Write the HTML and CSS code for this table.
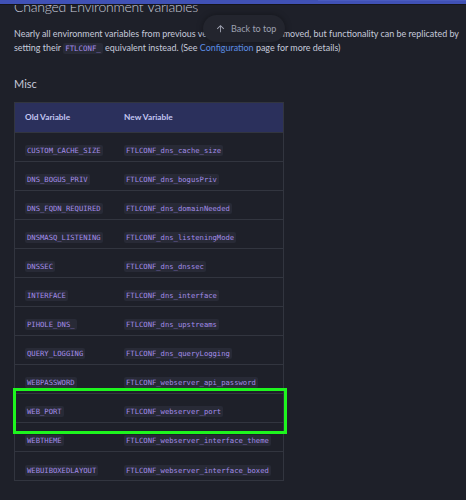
FILE: index.html
```html
<!DOCTYPE html>
<html lang="en">
<head>
<meta charset="utf-8">
<title>Changed Environment Variables</title>
<link rel="stylesheet" href="styles.css">
</head>
<body>
<header class="topbar"><div class="topbar-tabs"></div></header>
<main class="content">
  <h2 class="title">Changed Environment Variables</h2>
  <p class="lead">Nearly all environment variables from previous versions have been removed, but functionality can be replicated by setting their <code class="inline">FTLCONF_</code> equivalent instead. (See <a class="link" href="#">Configuration</a> page for more details)</p>
  <h3 class="subtitle">Misc</h3>
  <div class="table-wrap">
    <table class="vars">
      <thead>
        <tr><th class="c1">Old Variable</th><th>New Variable</th></tr>
      </thead>
      <tbody>
        <tr><td><code>CUSTOM_CACHE_SIZE</code></td><td><code>FTLCONF_dns_cache_size</code></td></tr>
        <tr><td><code>DNS_BOGUS_PRIV</code></td><td><code>FTLCONF_dns_bogusPriv</code></td></tr>
        <tr><td><code>DNS_FQDN_REQUIRED</code></td><td><code>FTLCONF_dns_domainNeeded</code></td></tr>
        <tr><td><code>DNSMASQ_LISTENING</code></td><td><code>FTLCONF_dns_listeningMode</code></td></tr>
        <tr><td><code>DNSSEC</code></td><td><code>FTLCONF_dns_dnssec</code></td></tr>
        <tr><td><code>INTERFACE</code></td><td><code>FTLCONF_dns_interface</code></td></tr>
        <tr><td><code>PIHOLE_DNS_</code></td><td><code>FTLCONF_dns_upstreams</code></td></tr>
        <tr><td><code>QUERY_LOGGING</code></td><td><code>FTLCONF_dns_queryLogging</code></td></tr>
        <tr><td><code>WEBPASSWORD</code></td><td><code>FTLCONF_webserver_api_password</code></td></tr>
        <tr><td><code>WEB_PORT</code></td><td><code>FTLCONF_webserver_port</code></td></tr>
        <tr><td><code>WEBTHEME</code></td><td><code>FTLCONF_webserver_interface_theme</code></td></tr>
        <tr><td><code>WEBUIBOXEDLAYOUT</code></td><td><code>FTLCONF_webserver_interface_boxed</code></td></tr>
      </tbody>
    </table>
  </div>
</main>
<a class="back-top" href="#">
  <svg class="back-top-icon" viewBox="0 0 24 24" width="11" height="11" aria-hidden="true"><path d="M13 20h-2V8l-5.5 5.5-1.42-1.42L12 4.16l7.92 7.92-1.42 1.42L13 8v12z" fill="currentColor"/></svg>
  <span>Back to top</span>
</a>
<div class="highlight"></div>
</body>
</html>
```
FILE: styles.css
```css
html, body {
  margin: 0;
  padding: 0;
  background: #1e2029;
}
body {
  font-family: "Lato", "Noto Sans", sans-serif;
  color: #bfc3d8;
  width: 466px;
  height: 500px;
  overflow: hidden;
  position: relative;
}
.topbar {
  position: absolute;
  left: 0;
  top: 0;
  width: 466px;
  height: 4px;
  background: #4051b5;
  box-shadow: 0 1px 0 #14151b;
  z-index: 5;
}
.topbar-tabs {
  margin-left: 318px;
  height: 1px;
  background: #4a5bc0;
}
.content {
  padding: 0 2px 0 14px;
}
.title {
  margin: -2.5px 0 0;
  font-size: 14px;
  line-height: 18px;
  letter-spacing: -0.25px;
  font-weight: 300;
  color: #c6c9d9;
}
.lead {
  margin: 11px 0 0;
  font-size: 8.95px;
  line-height: 14px;
  color: #c6cadb;
}
code {
  font-family: "DejaVu Sans Mono", "Liberation Mono", monospace;
  font-size: 7.2px;
  color: #a38ce9;
  background: #282a36;
  padding: 1px 2px;
  border-radius: 2px;
}
.inline {
  font-size: 7.4px;
}
.link {
  color: #5c8ee6;
  text-decoration: none;
}
.subtitle {
  margin: 20px 0 0;
  font-size: 11px;
  line-height: 15px;
  font-weight: 400;
  color: #c6c9d9;
}
.table-wrap {
  margin-top: 11px;
  width: 270px;
}
.vars {
  width: 270px;
  border-collapse: collapse;
  table-layout: fixed;
  border: 1px solid #32353f;
}
.vars th {
  background: #2b305c;
  color: #c4c7f2;
  font-size: 8.3px;
  font-weight: 700;
  text-align: left;
  height: 29px;
  padding: 0 10px;
}
.vars th.c1 {
  width: 79px;
}
.vars td {
  height: 28.05px;
  padding: 0 10px;
  border-top: 1px solid #32353f;
  white-space: nowrap;
}
.back-top {
  position: absolute;
  left: 203px;
  top: 15px;
  width: 82px;
  height: 27px;
  box-sizing: border-box;
  border-radius: 14px;
  background: #23252e;
  box-shadow: 0 0 6px rgba(0, 0, 0, 0.35);
  display: flex;
  align-items: center;
  gap: 5px;
  padding-left: 12px;
  color: #9ea1b0;
  font-size: 9px;
  text-decoration: none;
  z-index: 4;
}
.back-top-icon {
  flex: none;
}
.highlight {
  position: absolute;
  left: 13px;
  top: 388px;
  width: 274px;
  height: 46px;
  box-sizing: border-box;
  border: 3px solid #1ef51e;
  z-index: 3;
}
```
